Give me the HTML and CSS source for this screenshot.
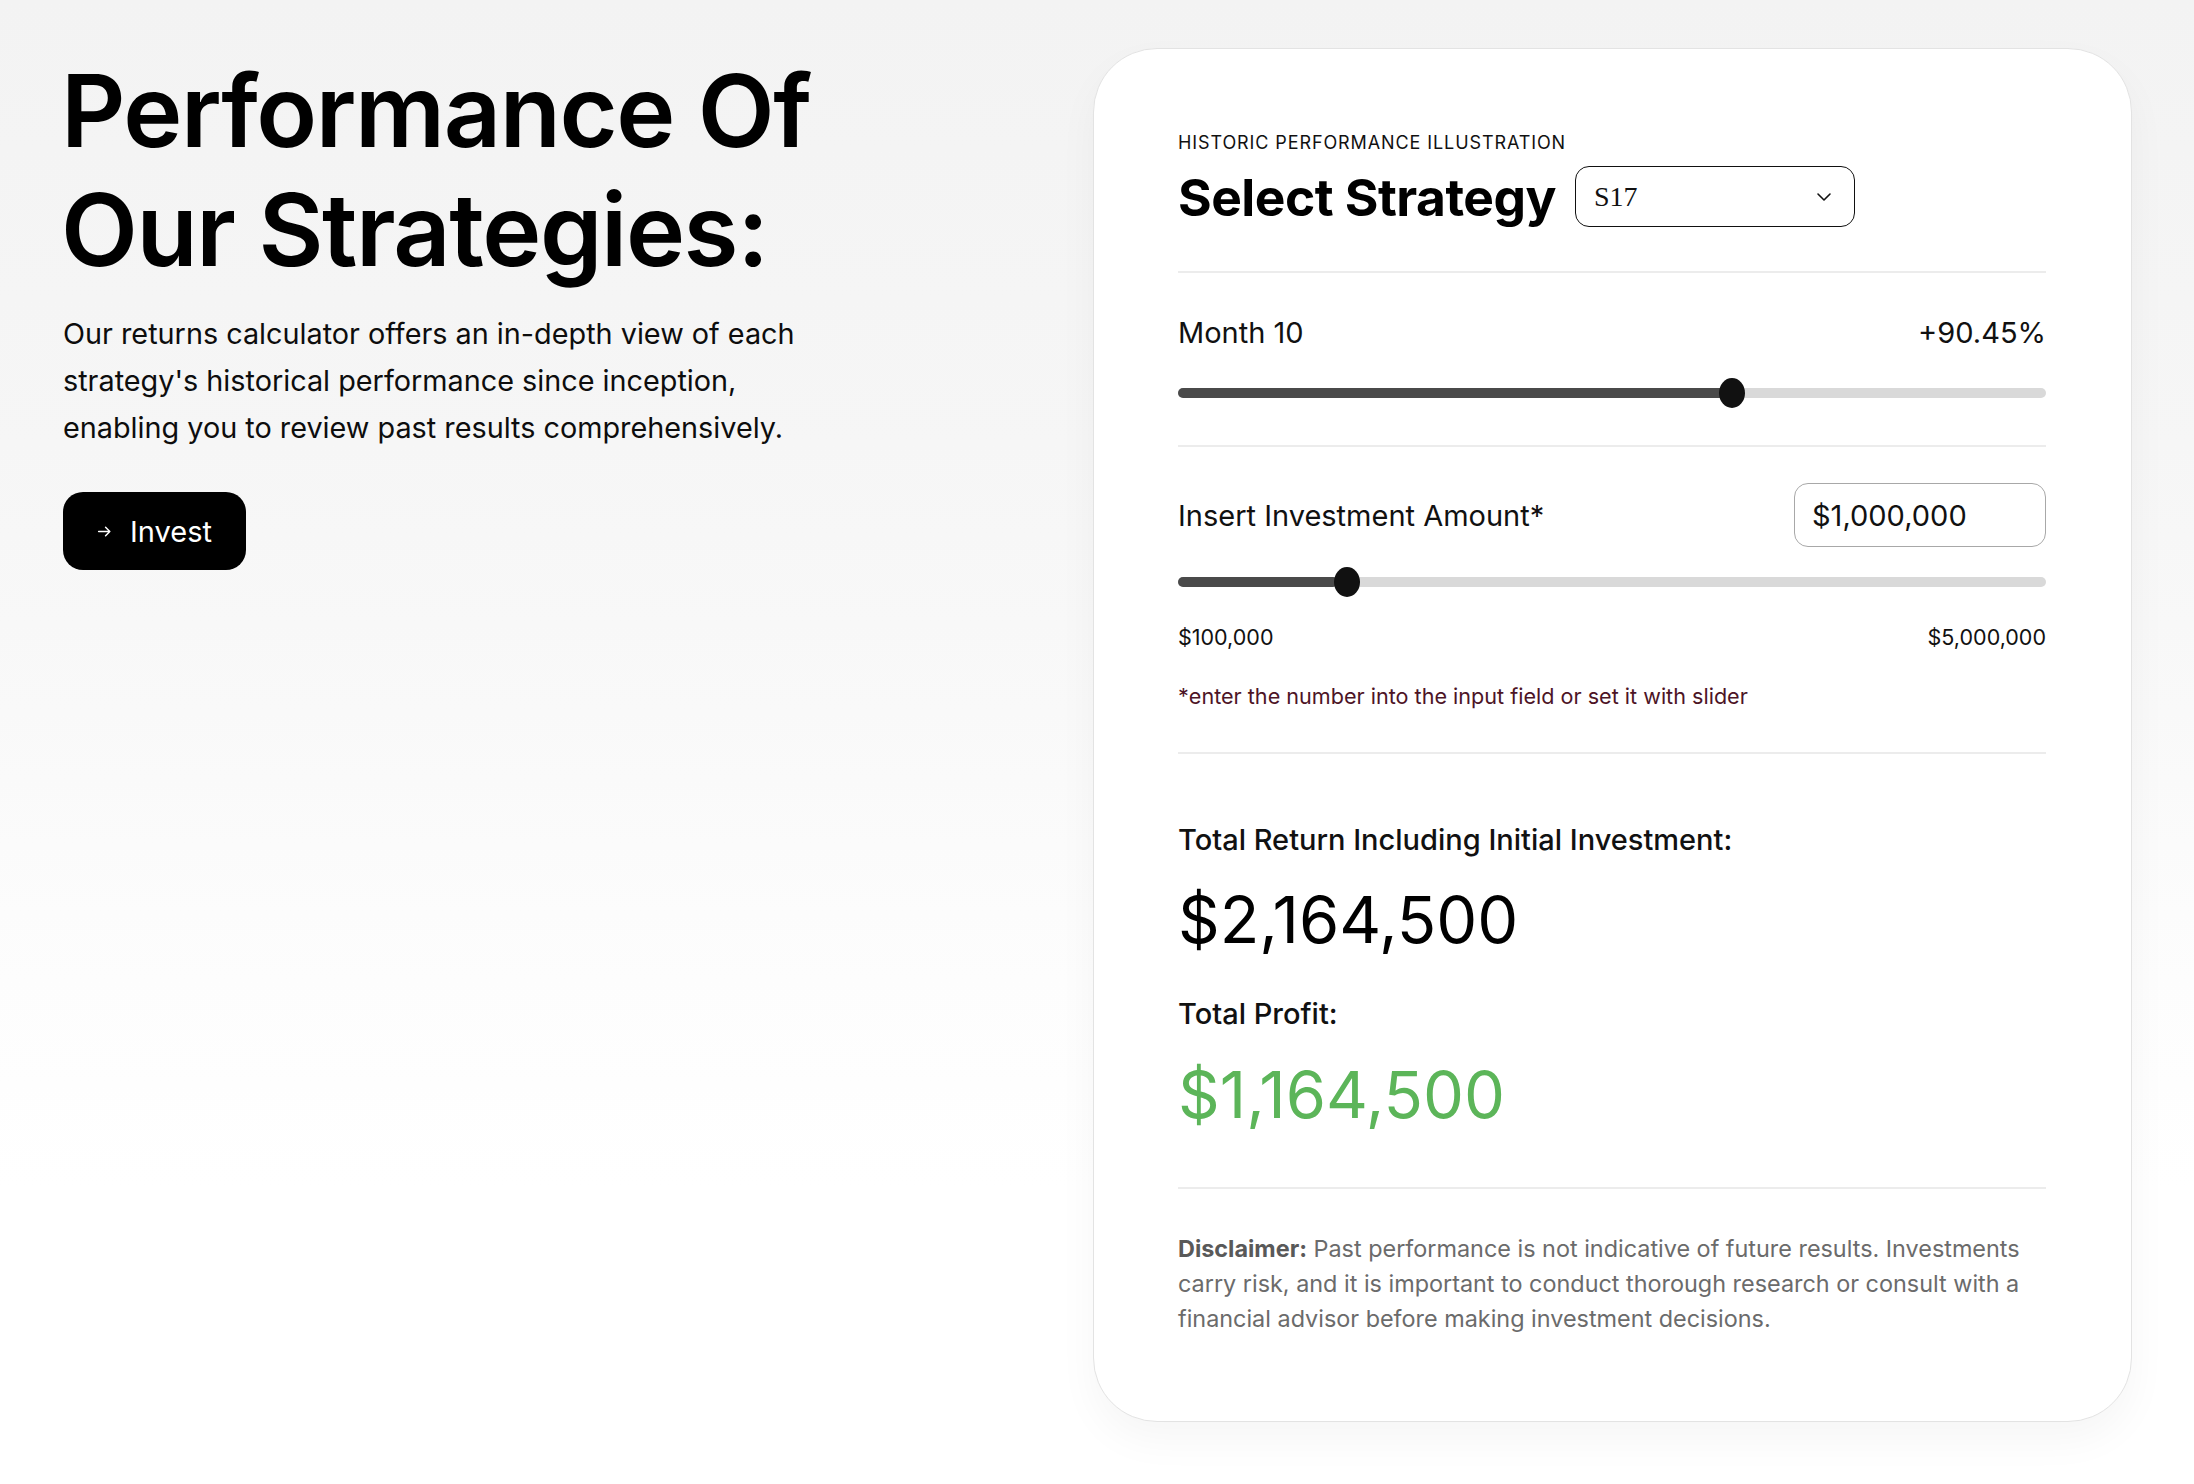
FILE: index.html
```html
<!DOCTYPE html>
<html lang="en">
<head>
<meta charset="utf-8">
<title>Performance Of Our Strategies</title>
<link rel="stylesheet" href="styles.css">
</head>
<body>
<main class="page">
  <section class="intro">
    <h1 class="intro-title">Performance Of<br>Our Strategies:</h1>
    <p class="intro-text">Our returns calculator offers an in-depth view of each strategy's historical performance since inception, enabling you to review past results comprehensively.</p>
    <a class="invest-btn" href="#">
      <svg class="invest-arrow" viewBox="0 0 16 16" width="17" height="17" aria-hidden="true"><path d="M2.5 8h10.5M9 4l4 4-4 4" fill="none" stroke="#fff" stroke-width="1.4" stroke-linecap="round" stroke-linejoin="round"/></svg>
      <span>Invest</span>
    </a>
  </section>

  <section class="card">
    <div class="eyebrow">HISTORIC PERFORMANCE ILLUSTRATION</div>
    <div class="title-row">
      <h2 class="card-title">Select Strategy</h2>
      <div class="select">
        <span class="select-value">S17</span>
        <svg class="select-chevron" viewBox="0 0 16 10" width="16" height="10" aria-hidden="true"><path d="M2 2l6 6 6-6" fill="none" stroke="#111" stroke-width="1.6" stroke-linecap="round" stroke-linejoin="round"/></svg>
      </div>
    </div>

    <hr class="divider div-1">

    <div class="row month-row">
      <span>Month 10</span>
      <span>+90.45%</span>
    </div>
    <div class="slider slider-1">
      <div class="slider-fill" style="width: 64.3%"></div>
      <div class="slider-thumb" style="left: calc(14px + (100% - 28px) * 0.643)"></div>
    </div>

    <hr class="divider div-2">

    <div class="row invest-row">
      <span>Insert Investment Amount*</span>
      <div class="amount-input">$1,000,000</div>
    </div>
    <div class="slider slider-2">
      <div class="slider-fill" style="width: 18.4%"></div>
      <div class="slider-thumb" style="left: calc(14px + (100% - 28px) * 0.184)"></div>
    </div>
    <div class="row range-labels">
      <span>$100,000</span>
      <span>$5,000,000</span>
    </div>
    <p class="note">*enter the number into the input field or set it with slider</p>

    <hr class="divider div-3">

    <div class="result-label result-label-1">Total Return Including Initial Investment:</div>
    <div class="result-value">$2,164,500</div>
    <div class="result-label result-label-2">Total Profit:</div>
    <div class="result-value profit">$1,164,500</div>

    <hr class="divider div-4">

    <p class="disclaimer"><strong>Disclaimer:</strong> Past performance is not indicative of future results. Investments carry risk, and it is important to conduct thorough research or consult with a financial advisor before making investment decisions.</p>
  </section>
</main>
</body>
</html>
```

FILE: styles.css
```css
* { box-sizing: border-box; }

html, body {
  margin: 0;
  padding: 0;
}

body {
  font-family: "Inter", "Noto Sans", "Liberation Sans", sans-serif;
  color: #0a0a0a;
  background: linear-gradient(180deg, #f3f3f3 0%, #f6f6f6 30%, #f9f9f9 48%, #fdfdfd 66%, #ffffff 80%, #ffffff 100%);
  min-height: 1484px;
}

.page {
  display: grid;
  grid-template-columns: 1fr 1039px;
  padding: 48px 62px 0 63px;
}

/* Left column */
.intro {
  padding-top: 3px;
}

.intro-title {
  margin: 0 0 0 -2px;
  font-size: 100px;
  line-height: 119px;
  font-weight: 600;
  letter-spacing: -0.014em;
  color: #000;
}

.intro-text {
  margin: 21px 0 0;
  font-size: 28.8px;
  line-height: 47px;
  color: #0d0d0d;
  max-width: 780px;
}

.invest-btn {
  display: inline-flex;
  align-items: center;
  gap: 17px;
  margin-top: 41px;
  height: 78px;
  padding: 0 34px 0 33px;
  background: #000;
  color: #fff;
  border-radius: 20px;
  text-decoration: none;
  font-size: 29px;
}

.invest-arrow { display: block; }

/* Card */
.card {
  background: #fff;
  border: 1.5px solid #e3e3e3;
  border-radius: 64px;
  padding: 82px 85px 84px 84px;
  box-shadow: 0 18px 40px rgba(0, 0, 0, 0.04);
  min-height: 1374px;
}

.eyebrow {
  font-size: 18px;
  line-height: 24px;
  letter-spacing: 0.05em;
  color: #111;
}

.title-row {
  display: flex;
  align-items: center;
  gap: 19px;
  margin-top: 11px;
}

.card-title {
  margin: 0;
  font-size: 51.5px;
  line-height: 60px;
  font-weight: 700;
  letter-spacing: -0.01em;
  color: #000;
}

.select {
  width: 280px;
  height: 61px;
  border: 1.5px solid #111;
  border-radius: 14px;
  display: flex;
  align-items: center;
  justify-content: space-between;
  padding: 0 22px 0 18px;
}

.select-value {
  font-family: "Liberation Serif", "DejaVu Serif", serif;
  font-size: 28px;
  color: #111;
}

.divider {
  margin: 0;
  border: 0;
  height: 2px;
  background: #ececec;
}

.div-1 { margin-top: 44px; }
.div-2 { margin-top: 38px; }
.div-3 { margin-top: 41px; }
.div-4 { margin-top: 52px; }

.row {
  display: flex;
  justify-content: space-between;
  align-items: center;
}

.month-row {
  margin-top: 43px;
  font-size: 29px;
  line-height: 34px;
  color: #111;
}

.slider {
  position: relative;
  height: 28px;
}

.slider::before {
  content: "";
  position: absolute;
  left: 0;
  right: 0;
  top: 9px;
  height: 10px;
  border-radius: 5px;
  background: #d9d9d9;
}

.slider-fill {
  position: absolute;
  left: 0;
  top: 9px;
  height: 10px;
  border-radius: 5px;
  background: #4a4a4a;
}

.slider-thumb {
  position: absolute;
  top: 0;
  width: 26px;
  height: 30px;
  margin-left: -13px;
  margin-top: -1px;
  border-radius: 50%;
  background: #111;
}

.slider-1 { margin-top: 29px; }

.invest-row {
  margin-top: 36px;
  font-size: 29px;
  color: #111;
}

.amount-input {
  width: 252px;
  height: 64px;
  border: 1.5px solid #a8a8a8;
  border-radius: 14px;
  display: flex;
  align-items: center;
  padding: 0 17px;
  font-size: 29px;
  color: #111;
}

.slider-2 { margin-top: 21px; }

.range-labels {
  margin-top: 26px;
  font-size: 21.5px;
  line-height: 30px;
  color: #111;
}

.note {
  margin: 29px 0 0;
  font-size: 21.6px;
  line-height: 30px;
  color: #4d1426;
}

.result-label {
  font-size: 29px;
  line-height: 36px;
  font-weight: 500;
  color: #111;
}

.result-label-1 { margin-top: 68px; }
.result-label-2 { margin-top: 36px; }

.result-value {
  margin-top: 22px;
  font-size: 65px;
  line-height: 80px;
  font-weight: 400;
  color: #000;
}

.result-value.profit {
  margin-top: 23px;
  color: #5cb559;
}

.disclaimer {
  margin: 42px 0 0;
  font-size: 23.4px;
  line-height: 35px;
  color: #6b6b6b;
}

.disclaimer strong {
  font-weight: 700;
  color: #595959;
}
```
